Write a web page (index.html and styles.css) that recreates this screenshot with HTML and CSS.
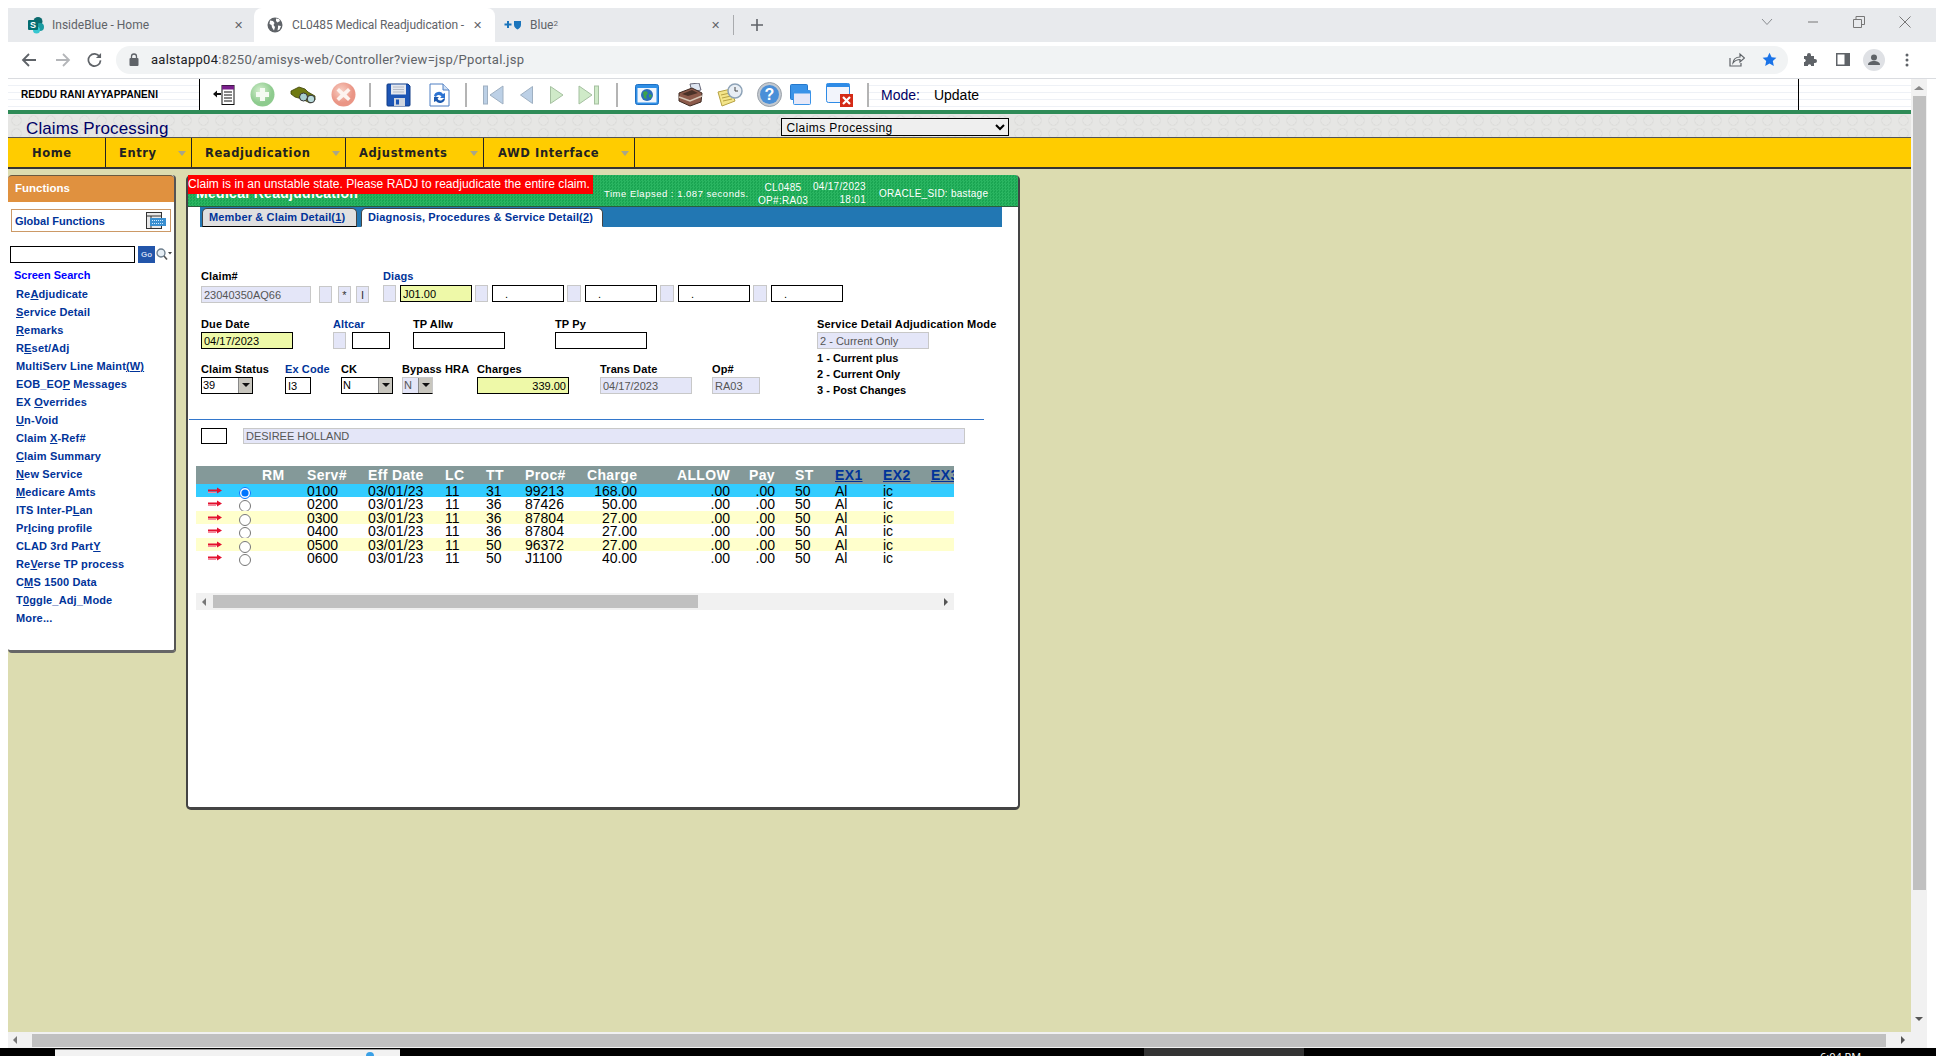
FILE: index.html
```html
<!DOCTYPE html>
<html lang="en">
<head>
    <meta charset="UTF-8">
    <meta name="viewport" content="width=device-width, initial-scale=1.0">
    <title>CL0485 Medical Readjudication</title>
    <link rel="stylesheet" href="styles.css">
</head>
<body>
<div class="app">
    <!-- browser tabs -->
    <div class="tabstrip">
        <div class="tab tab-first">
            <svg class="fav" width="18" height="18" viewBox="0 0 18 18"><circle cx="11" cy="5.5" r="4.5" fill="#0b6a6e"/><circle cx="13" cy="11" r="4" fill="#1a9ba1"/><circle cx="9.5" cy="14" r="3.5" fill="#37c6d0"/><rect x="1" y="4" width="10" height="10" rx="1" fill="#036c70"/><text x="6" y="12.2" class="fav-s">S</text></svg>
            <span class="tab-text">InsideBlue - Home</span>
            <span class="tab-x">&#10005;</span>
        </div>
        <div class="tab tab-active">
            <svg class="fav" width="16" height="16" viewBox="0 0 16 16"><circle cx="8" cy="8" r="7.5" fill="#5f6368"/><path d="M3 3.5l3 .5 1.5 2-1 2 1.500 2-1 3.500-2-3-.5-2.500-2-1zM9 1.500l3 .5 1 2-2.500 1.500-1.500-1.500zM11 8.500l3 .5-1.500 3.500-2 1 .5-3z" fill="#fff"/></svg>
            <span class="tab-text tab-text-long">CL0485 Medical Readjudication -</span>
            <span class="tab-x">&#10005;</span>
        </div>
        <div class="tab tab-third">
            <svg class="fav" width="18" height="10" viewBox="0 0 18 10"><path d="M3 1h2v2.500h2.500v2H5V8H3V5.500H.5v-2H3z" fill="#1b75bc"/><path d="M10 1h7v4c0 2-2 3.500-3.500 4.500C12 8.500 10 7 10 5z" fill="#1b75bc"/></svg>
            <span class="tab-text">Blue<sup class="sup">2</sup></span>
            <span class="tab-x">&#10005;</span>
        </div>
        <span class="tab-div"></span>
        <svg class="new-tab" width="12" height="12" viewBox="0 0 12 12"><path d="M6 0v12M0 6h12" stroke="#5f6368" stroke-width="1.600"/></svg>
        <div class="win-btns">
            <svg width="12" height="8" viewBox="0 0 12 8"><path d="M1 1l5 5.500L11 1" fill="none" stroke="#8a8d91"/></svg>
            <svg width="12" height="2" viewBox="0 0 12 2"><path d="M1 1h10" stroke="#777"/></svg>
            <svg width="12" height="12" viewBox="0 0 12 12"><path d="M.5 3.500h8v8h-8zM3 3.500V.5h8.500v8H8.500" fill="none" stroke="#777"/></svg>
            <svg width="12" height="12" viewBox="0 0 12 12"><path d="M.5.5l11 11M11.500.5l-11 11" stroke="#777"/></svg>
        </div>
    </div>

    <!-- browser address bar -->
    <div class="navbar">
        <svg class="nav-back" width="16" height="16" viewBox="0 0 16 16"><path d="M15 8H2M8 2L2 8l6 6" fill="none" stroke="#5f6368" stroke-width="1.800"/></svg>
        <svg class="nav-fwd" width="16" height="16" viewBox="0 0 16 16"><path d="M1 8h13M8 2l6 6-6 6" fill="none" stroke="#b4b6b9" stroke-width="1.800"/></svg>
        <svg class="nav-reload" width="15" height="15" viewBox="0 0 16 16"><path d="M13.500 5A6.500 6.500 0 1 0 14.500 9" fill="none" stroke="#5f6368" stroke-width="1.800"/><path d="M15 1v5.500H9.500z" fill="#5f6368"/></svg>
        <div class="address">
            <svg class="lock" width="10" height="13" viewBox="0 0 10 13"><path d="M2.500 5V3.500a2.500 2.500 0 0 1 5 0V5" fill="none" stroke="#5f6368" stroke-width="1.300"/><rect x=".5" y="5" width="9" height="8" rx="1" fill="#5f6368"/></svg>
            <span class="url"><span class="url-host">aalstapp04</span>:8250/amisys-web/Controller?view=jsp/Pportal.jsp</span>
            <svg class="share" width="16" height="15" viewBox="0 0 16 15"><path d="M1 6v8h11v-3" fill="none" stroke="#5f6368" stroke-width="1.200"/><path d="M4 11c.5-4 3.500-6 7-6V2l4.500 4-4.500 4V7.500C8 7.500 6 8.500 4 11z" fill="none" stroke="#5f6368" stroke-width="1.200"/></svg>
            <svg class="star" width="15" height="15" viewBox="0 0 24 24"><path d="M12 1l3.400 7.300 7.600.9-5.700 5.300 1.600 7.900L12 18.400 5.100 22.400l1.600-7.900L1 9.200l7.600-.9z" fill="#1a73e8"/></svg>
        </div>
        <svg class="puzzle" width="15" height="15" viewBox="0 0 15 15"><path d="M1 4h3V3a2 2 0 0 1 4 0v1h3v3h1a2 2 0 0 1 0 4h-1v3H8v-1a2 2 0 0 0-3 0v1H1v-4h1a2 2 0 0 0 0-3H1z" fill="#5f6368"/></svg>
        <svg class="sidep" width="14" height="13" viewBox="0 0 14 13"><rect width="14" height="13" fill="#5f6368"/><rect x="1.500" y="1.500" width="7" height="10" fill="#fff"/></svg>
        <svg class="avatar" width="22" height="22" viewBox="0 0 22 22"><circle cx="11" cy="11" r="11" fill="#dfe1e5"/><circle cx="11" cy="8.500" r="3" fill="#5f6368"/><path d="M5 16c0-3 3-4 6-4s6 1 6 4z" fill="#5f6368"/></svg>
        <svg class="dots" width="4" height="14" viewBox="0 0 4 14"><circle cx="2" cy="2" r="1.500" fill="#5f6368"/><circle cx="2" cy="7" r="1.500" fill="#5f6368"/><circle cx="2" cy="12" r="1.500" fill="#5f6368"/></svg>
    </div>

    <div class="window">
        <div class="page">
            <!-- application toolbar -->
            <div class="toolbar">
                <div class="user-cell">REDDU RANI AYYAPPANENI</div>
                <div class="tools">
                    <svg class="ic g13" width="22" height="20" viewBox="0 0 22 20"><rect x="9" y=".5" width="12" height="19" fill="#fff" stroke="#111"/><rect x="9" y=".5" width="12" height="4" fill="#7a1f8c"/><path d="M11 7h8M11 10h8M11 13h8M11 16h8" stroke="#111"/><path d="M0 9l4-3.500V8h4v2H4v2.500z" fill="#111"/></svg>
                    <svg class="ic" width="25" height="25" viewBox="0 0 25 25"><defs><radialGradient id="gPlus" cx=".4" cy=".35"><stop offset="0" stop-color="#d6f0d0"/><stop offset="1" stop-color="#8ecb8e"/></radialGradient></defs><circle cx="12.500" cy="12.500" r="12" fill="url(#gPlus)"/><path d="M10 6h5v4h4v5h-4v4h-5v-4H6v-5h4z" fill="#f4fbf2"/></svg>
                    <svg class="ic" width="27" height="18" viewBox="0 0 27 18"><path d="M1 5l8-4 6 2 3 3 7 4v4l-5 3-4-2-4-2-7-2-4-3z" fill="#6f7a12" stroke="#3d4206" stroke-width=".8"/><circle cx="13.500" cy="11" r="4" fill="#a9cfcf" stroke="#333"/><circle cx="21" cy="13" r="3.800" fill="#b8dada" stroke="#333"/></svg>
                    <svg class="ic g14" width="25" height="25" viewBox="0 0 25 25"><defs><radialGradient id="gStop" cx=".4" cy=".35"><stop offset="0" stop-color="#f8d0c4"/><stop offset="1" stop-color="#ea9585"/></radialGradient></defs><circle cx="12.500" cy="12.500" r="12" fill="url(#gStop)"/><path d="M8 6l4.500 4L17 6l2.500 2.500-4 4 4 4L17 19l-4.500-4L8 19l-2.500-2.500 4-4-4-4z" fill="#fdf3ef"/></svg>
                    <span class="sep g13"></span>
                    <svg class="ic" width="25" height="24" viewBox="0 0 25 24"><path d="M1 2a1 1 0 0 1 1-1h20l2 2v19a1 1 0 0 1-1 1H2a1 1 0 0 1-1-1z" fill="#1d55b5" stroke="#123c85"/><rect x="5" y="1.500" width="15" height="10" fill="#e4e7ee"/><path d="M7 4h11M7 6.500h11M7 9h11" stroke="#b4bac6"/><rect x="8" y="15" width="11" height="8" fill="#cfd5df"/><rect x="10" y="16.500" width="3" height="5" fill="#1d55b5"/></svg>
                    <svg class="ic g18" width="21" height="24" viewBox="0 0 21 24"><path d="M1 1h13l6 6v16H1z" fill="#fff" stroke="#4f7ec2"/><path d="M14 1v6h6" fill="#cfe0f5" stroke="#4f7ec2"/><path d="M5 13a5 5 0 0 1 9-2l2-1v5h-5l1.500-1.500A3 3 0 0 0 7 14z" fill="#2c73d2"/><path d="M16 15a5 5 0 0 1-9 3l-2 1v-5h5l-1.500 1.500A3 3 0 0 0 14 16z" fill="#1b58ae"/></svg>
                    <span class="sep"></span>
                    <svg class="ic g16" width="21" height="20" viewBox="0 0 21 20"><rect x=".5" y="1" width="4" height="18" fill="#bcd0e6" stroke="#9fb0c2"/><path d="M20 1v18L7 10z" fill="#bcd0e6" stroke="#9fb0c2"/></svg>
                    <svg class="ic g16" width="13" height="18" viewBox="0 0 13 18"><path d="M12.500 .5v17L.5 9z" fill="#bcd0e6" stroke="#9fb0c2"/></svg>
                    <svg class="ic g17" width="14" height="18" viewBox="0 0 14 18"><path d="M.5 .5v17L13 9z" fill="#cfeac8" stroke="#a5c0a0"/></svg>
                    <svg class="ic g14" width="21" height="20" viewBox="0 0 21 20"><path d="M1 1v18l13-9z" fill="#cfeac8" stroke="#a5c0a0"/><rect x="16.500" y="1" width="4" height="18" fill="#cfeac8" stroke="#a5c0a0"/></svg>
                    <span class="sep g17"></span>
                    <svg class="ic g17" width="24" height="21" viewBox="0 0 24 21"><rect x=".5" y=".5" width="23" height="20" rx="2" fill="#2f8fe6" stroke="#1d6fc4"/><rect x="2.500" y="4" width="19" height="14.500" fill="#f2f6fc"/><circle cx="12" cy="11" r="6" fill="#2b6db8"/><path d="M8 8l3-1 2 2-2 3 1 3-3-1zM14 10l3 1-1 3-2-1z" fill="#3da34a"/></svg>
                    <svg class="ic g18" width="27" height="24" viewBox="0 0 27 24"><path d="M13 1l9-1 2 7-9 2z" fill="#dfe6f2" stroke="#667"/><path d="M2 10l13-5 10 5-1 9-11 4L2 18z" fill="#8c5a4a" stroke="#3e2a22"/><path d="M2 14l11 4 12-5" fill="none" stroke="#d8c8b8" stroke-width="1.500"/><path d="M5 11l10-4 6 3-10 3z" fill="#4a3228"/></svg>
                    <svg class="ic g13" width="26" height="24" viewBox="0 0 26 24"><path d="M1 9l13-3 4 12-13 5z" fill="#f4e58a" stroke="#b7a243"/><path d="M4 12l9-2M5 15l9-2M6 18l9-2" stroke="#b7a243"/><circle cx="18" cy="8" r="7" fill="#e8eef5" stroke="#8ea3b8" stroke-width="1.500"/><path d="M18 4v4h3" fill="none" stroke="#444"/></svg>
                    <svg class="ic g14" width="25" height="25" viewBox="0 0 25 25"><circle cx="12.500" cy="12.500" r="12" fill="#c3c9d0" stroke="#9aa1a9"/><circle cx="12.500" cy="12.500" r="9.500" fill="#4a8fd8"/><text x="12.500" y="18" class="help-mark">?</text></svg>
                    <svg class="ic g8" width="21" height="21" viewBox="0 0 21 21"><rect x=".5" y=".5" width="17" height="15" rx="1" fill="#3a93e8" stroke="#2478cc"/><rect x="3.500" y="6.500" width="17" height="14" rx="1" fill="#e6e8f8" stroke="#3a93e8"/><rect x="3.500" y="6.500" width="17" height="3" fill="#3a93e8"/></svg>
                    <svg class="ic" width="27" height="24" viewBox="0 0 27 24"><rect x=".5" y=".5" width="23" height="19" rx="2" fill="#f2f4fb" stroke="#2e8be6"/><rect x=".5" y=".5" width="23" height="3.500" fill="#2e8be6"/><rect x="14" y="11" width="13" height="13" fill="#d42a16"/><path d="M17 14l7 7M24 14l-7 7" stroke="#fff" stroke-width="2.200"/></svg>
                    <span class="sep g14"></span>
                </div>
                <div class="mode-cell"><span class="mode-label">Mode:</span><span class="mode-val">Update</span></div>
                <div class="tool-rest"></div>
            </div>

            <!-- title row -->
            <div class="titleband">
                <span class="app-title">Claims Processing</span>
                <select class="app-select"><option>Claims Processing</option></select>
            </div>

            <!-- main menu -->
            <div class="menubar">
                <div class="mi mi-home">Home</div>
                <div class="mi mi-entry has-sub">Entry</div>
                <div class="mi mi-readj has-sub">Readjudication</div>
                <div class="mi mi-adj has-sub">Adjustments</div>
                <div class="mi mi-awd has-sub">AWD Interface</div>
            </div>

            <div class="workarea">
                <!-- left functions panel -->
                <div class="sidepanel">
                    <div class="side-head">Functions</div>
                    <div class="global-box">
                        <span>Global Functions</span>
                        <svg width="20" height="17" viewBox="0 0 20 17"><rect x=".5" y=".5" width="15" height="16" fill="#e8e8e8" stroke="#333"/><path d="M.5 4h15M5 4v13" stroke="#333"/><rect x="4" y="6" width="16" height="8" fill="#3a8fd0"/><path d="M6 8.500h12M6 11.500h12" stroke="#d6ecff" stroke-dasharray="1 1"/></svg>
                    </div>
                    <div class="search-row">
                        <input class="search-input" type="text">
                        <span class="go-btn">Go</span>
                        <svg width="16" height="12" viewBox="0 0 16 12"><circle cx="5" cy="5" r="4" fill="#e6eef5" stroke="#6e7f8e" stroke-width="1.300"/><path d="M8 8l3 3.500" stroke="#555" stroke-width="1.600"/><path d="M12 4h4l-2 2.500z" fill="#444"/></svg>
                    </div>
                    <div class="screen-search">Screen Search</div>
                    <ul class="fn-list">
                        <li>Re<u>A</u>djudicate</li>
                        <li><u>S</u>ervice Detail</li>
                        <li><u>R</u>emarks</li>
                        <li>R<u>E</u>set/Adj</li>
                        <li>MultiServ Line Maint<u>(W)</u></li>
                        <li>EOB_EO<u>P</u> Messages</li>
                        <li>EX <u>O</u>verrides</li>
                        <li><u>U</u>n-Void</li>
                        <li>Claim <u>X</u>-Ref#</li>
                        <li><u>C</u>laim Summary</li>
                        <li><u>N</u>ew Service</li>
                        <li><u>M</u>edicare Amts</li>
                        <li>ITS Inter-P<u>L</u>an</li>
                        <li>Pr<u>I</u>cing profile</li>
                        <li>CLAD 3rd Part<u>Y</u></li>
                        <li>Re<u>V</u>erse TP process</li>
                        <li>C<u>M</u>S 1500 Data</li>
                        <li>T<u>0</u>ggle_Adj_Mode</li>
                        <li>More...</li>
                    </ul>
                </div>

                <!-- claim panel -->
                <div class="claimpanel">
                    <div class="claim-head">
                        <div class="claim-title">Medical Readjudication</div>
                        <div class="h-elapsed">Time Elapsed : 1.087 seconds.</div>
                        <div class="h-op">CL0485<br>OP#:RA03</div>
                        <div class="h-date">04/17/2023<br>18:01</div>
                        <div class="h-sid">ORACLE_SID: bastage</div>
                        <div class="alert">Claim is in an unstable state. Please RADJ to readjudicate the entire claim.</div>
                    </div>
                    <div class="tabbar">
                        <div class="ctab ctab-off">Member &amp; Claim Detail(<u>1</u>)</div>
                        <div class="ctab ctab-on">Diagnosis, Procedures &amp; Service Detail(<u>2</u>)</div>
                    </div>

                    <div class="claimform">
                        <div class="row1">
                            <div class="cell">
                                <label class="lbl">Claim#</label>
                                <div class="inline shift">
                                    <input class="fi ro w110" value="23040350AQ66">
                                    <input class="fi ro w13 ml8">
                                    <input class="fi ro w13 ml6 mid" value="*">
                                    <input class="fi ro w13 ml5 mid" value="I">
                                </div>
                            </div>
                            <div class="cell">
                                <label class="lbl link">Diags</label>
                                <div class="inline">
                                    <input class="fi ro w13">
                                    <input class="fi req w72 ml4" value="J01.00">
                                    <input class="fi ro w13 ml3">
                                    <input class="fi w72 ml4 dot" value=".">
                                    <input class="fi ro w14 ml3">
                                    <input class="fi w72 ml4 dot" value=".">
                                    <input class="fi ro w14 ml3">
                                    <input class="fi w72 ml4 dot" value=".">
                                    <input class="fi ro w14 ml3">
                                    <input class="fi w72 ml4 dot" value=".">
                                </div>
                            </div>
                        </div>

                        <div class="midform">
                            <div class="midleft">
                                <div class="row2">
                                    <div class="cell"><label class="lbl">Due Date</label><input class="fi req w92" value="04/17/2023"></div>
                                    <div class="cell"><label class="lbl link">Altcar</label><div class="inline"><input class="fi ro w13"><input class="fi w38 ml6"></div></div>
                                    <div class="cell"><label class="lbl">TP Allw</label><input class="fi w92"></div>
                                    <div class="cell"><label class="lbl">TP Py</label><input class="fi w92"></div>
                                </div>
                                <div class="row3">
                                    <div class="cell"><label class="lbl">Claim Status</label><div class="combo w52"><span>39</span><i></i></div></div>
                                    <div class="cell"><label class="lbl link">Ex Code</label><input class="fi w26" value="I3"></div>
                                    <div class="cell"><label class="lbl">CK</label><div class="combo w52"><span>N</span><i></i></div></div>
                                    <div class="cell"><label class="lbl">Bypass HRA</label><div class="combo combo-ro w31"><span>N</span><i></i></div></div>
                                    <div class="cell"><label class="lbl">Charges</label><input class="fi req w92 right" value="339.00"></div>
                                    <div class="cell"><label class="lbl">Trans Date</label><input class="fi ro w92" value="04/17/2023"></div>
                                    <div class="cell"><label class="lbl">Op#</label><input class="fi ro w48" value="RA03"></div>
                                </div>
                            </div>
                            <div class="modebox">
                                <label class="lbl lbl-wide">Service Detail Adjudication Mode</label>
                                <input class="fi ro w112" value="2 - Current Only">
                                <div class="modeopt">1 - Current plus</div>
                                <div class="modeopt">2 - Current Only</div>
                                <div class="modeopt">3 - Post Changes</div>
                            </div>
                        </div>

                        <div class="rule"></div>
                        <div class="namerow">
                            <input class="fi w26">
                            <input class="fi ro namefield" value="DESIREE HOLLAND">
                        </div>
                    </div>

                    <table class="svc">
                        <colgroup><col class="c40"><col class="c26"><col class="c45"><col class="c61"><col class="c77"><col class="c41"><col class="c39"><col class="c62"><col class="c50"><col class="c93"><col class="c45"><col class="c60"><col class="c48"><col class="c48"><col class="c23"></colgroup>
                        <thead>
                            <tr><th></th><th></th><th>RM</th><th>Serv#</th><th>Eff Date</th><th>LC</th><th>TT</th><th>Proc#</th><th class="num">Charge</th><th class="num">ALLOW</th><th class="num">Pay</th><th class="st">ST</th><th><a class="exlink">EX1</a></th><th><a class="exlink">EX2</a></th><th class="clip"><a class="exlink">EX3</a></th></tr>
                        </thead>
                        <tbody>
                            <tr class="sel"><td><svg class="arr" width="14" height="8" viewBox="0 0 14 8"><path d="M0 2.500h9V.5L14 3.500 9 6.500V4.500H0z" fill="#e3102f"/><path d="M0 5.500h8" stroke="#f58aa0"/></svg></td><td><input type="radio" name="svc" checked></td><td></td><td>0100</td><td class="dt">03/01/23</td><td>11</td><td>31</td><td>99213</td><td class="num">168.00</td><td class="num">.00</td><td class="num">.00</td><td class="st">50</td><td>Al</td><td>ic</td><td></td></tr>
                            <tr><td><svg class="arr" width="14" height="8" viewBox="0 0 14 8"><path d="M0 2.500h9V.5L14 3.500 9 6.500V4.500H0z" fill="#e3102f"/><path d="M0 5.500h8" stroke="#f58aa0"/></svg></td><td><input type="radio" name="svc"></td><td></td><td>0200</td><td class="dt">03/01/23</td><td>11</td><td>36</td><td>87426</td><td class="num">50.00</td><td class="num">.00</td><td class="num">.00</td><td class="st">50</td><td>Al</td><td>ic</td><td></td></tr>
                            <tr class="alt"><td><svg class="arr" width="14" height="8" viewBox="0 0 14 8"><path d="M0 2.500h9V.5L14 3.500 9 6.500V4.500H0z" fill="#e3102f"/><path d="M0 5.500h8" stroke="#f58aa0"/></svg></td><td><input type="radio" name="svc"></td><td></td><td>0300</td><td class="dt">03/01/23</td><td>11</td><td>36</td><td>87804</td><td class="num">27.00</td><td class="num">.00</td><td class="num">.00</td><td class="st">50</td><td>Al</td><td>ic</td><td></td></tr>
                            <tr><td><svg class="arr" width="14" height="8" viewBox="0 0 14 8"><path d="M0 2.500h9V.5L14 3.500 9 6.500V4.500H0z" fill="#e3102f"/><path d="M0 5.500h8" stroke="#f58aa0"/></svg></td><td><input type="radio" name="svc"></td><td></td><td>0400</td><td class="dt">03/01/23</td><td>11</td><td>36</td><td>87804</td><td class="num">27.00</td><td class="num">.00</td><td class="num">.00</td><td class="st">50</td><td>Al</td><td>ic</td><td></td></tr>
                            <tr class="alt"><td><svg class="arr" width="14" height="8" viewBox="0 0 14 8"><path d="M0 2.500h9V.5L14 3.500 9 6.500V4.500H0z" fill="#e3102f"/><path d="M0 5.500h8" stroke="#f58aa0"/></svg></td><td><input type="radio" name="svc"></td><td></td><td>0500</td><td class="dt">03/01/23</td><td>11</td><td>50</td><td>96372</td><td class="num">27.00</td><td class="num">.00</td><td class="num">.00</td><td class="st">50</td><td>Al</td><td>ic</td><td></td></tr>
                            <tr><td><svg class="arr" width="14" height="8" viewBox="0 0 14 8"><path d="M0 2.500h9V.5L14 3.500 9 6.500V4.500H0z" fill="#e3102f"/><path d="M0 5.500h8" stroke="#f58aa0"/></svg></td><td><input type="radio" name="svc"></td><td></td><td>0600</td><td class="dt">03/01/23</td><td>11</td><td>50</td><td>J1100</td><td class="num">40.00</td><td class="num">.00</td><td class="num">.00</td><td class="st">50</td><td>Al</td><td>ic</td><td></td></tr>
                        </tbody>
                    </table>

                    <div class="svc-scroll">
                        <span class="arrow-left"></span>
                        <span class="svc-thumb"></span>
                        <span class="arrow-right"></span>
                    </div>
                </div>
            </div>

            <div class="hbar">
                <span class="arrow-left"></span>
                <span class="hbar-thumb"></span>
                <span class="arrow-right"></span>
            </div>
        </div>

        <div class="vbar">
            <span class="arrow-up"></span>
            <span class="vbar-thumb"></span>
            <span class="arrow-down"></span>
        </div>
    </div>

    <!-- windows taskbar, mostly cut off -->
    <div class="taskbar">
        <div class="task-search"><span class="task-dot"></span></div>
        <div class="task-open"></div>
        <div class="task-clock">6:04 PM</div>
    </div>
</div>
</body>
</html>
```

FILE: styles.css
```css
* {
    box-sizing: border-box;
}
html, body {
    margin: 0;
    padding: 0;
    background: #fff;
}
.app {
    width: 1936px;
    height: 1056px;
    display: flex;
    flex-direction: column;
    overflow: hidden;
    font-family: "Liberation Sans", Arial, sans-serif;
    font-size: 11px;
}

/* browser tabs */
.tabstrip {
    height: 34px;
    margin: 8px 0 0 8px;
    background: #e8eaed;
    display: flex;
    align-items: center;
    flex: none;
    font-family: Roboto, sans-serif;
    font-size: 12px;
    color: #5f6368;
}
.tab {
    height: 34px;
    display: flex;
    align-items: center;
    position: relative;
}
.tab-text {
    white-space: nowrap;
}
.tab-text-long {
    letter-spacing: -.1px;
}
.tab-x {
    position: absolute;
    font-size: 11px;
    color: #5f6368;
}
.tab-first {
    width: 246px;
    padding-left: 19px;
}
.tab-first .fav { margin-right: 7px; }
.tab-first .tab-x { left: 226px; }
.tab-active {
    width: 241px;
    padding-left: 13px;
    background: #fff;
    border-radius: 8px 8px 0 0;
}
.tab-active .fav { margin-right: 9px; }
.tab-active .tab-x { left: 219px; }
.tab-third {
    width: 238px;
    padding-left: 9px;
}
.tab-third .fav { margin-right: 8px; }
.tab-third .tab-x { left: 216px; }
.fav-s {
    font-family: "Liberation Sans", sans-serif;
    font-size: 9px;
    font-weight: bold;
    fill: #fff;
    text-anchor: middle;
}
.sup {
    font-size: 8px;
    vertical-align: top;
    line-height: 12px;
}
.tab-div {
    width: 1px;
    height: 20px;
    background: #a9abae;
}
.new-tab {
    margin-left: 17px;
}
.win-btns {
    margin-left: auto;
    width: 175px;
    height: 100%;
    display: flex;
    align-items: center;
    justify-content: space-between;
    padding: 0 25px 6px 0;
}

/* browser address bar */
.navbar {
    height: 37px;
    flex: none;
    margin-left: 8px;
    display: flex;
    align-items: center;
    border-bottom: 1px solid #dadce0;
    padding-bottom: 1px;
}
.nav-back { margin-left: 13px; }
.nav-fwd { margin-left: 18px; }
.nav-reload { margin-left: 16px; }
.address {
    width: 1672px;
    height: 28px;
    margin-left: 14px;
    border-radius: 14px;
    background: #f1f3f4;
    display: flex;
    align-items: center;
    padding-left: 13px;
}
.url {
    margin-left: 12px;
    font-family: Roboto, sans-serif;
    font-size: 13px;
    color: #5f6368;
    letter-spacing: .27px;
}
.url-host {
    color: #202124;
}
.share {
    margin-left: auto;
}
.star {
    margin-left: 17px;
    margin-right: 11px;
}
.puzzle { margin-left: 15px; }
.sidep { margin-left: 18px; }
.avatar { margin-left: 13px; }
.dots { margin-left: 20px; }

/* app window */
.window {
    flex: 1;
    min-height: 0;
    display: flex;
    margin-left: 8px;
}
.page {
    width: 1903px;
    display: flex;
    flex-direction: column;
}
.toolbar {
    height: 31px;
    display: flex;
    flex: none;
    align-items: stretch;
    background: repeating-linear-gradient(#fff 0 6px, #eef1f6 6px 7px);
}
.user-cell {
    width: 192px;
    padding-left: 13px;
    border-right: 1.500px solid #000;
    font-size: 10px;
    font-weight: bold;
    letter-spacing: .1px;
    color: #000;
    display: flex;
    align-items: center;
    white-space: nowrap;
}
.tools {
    display: flex;
    align-items: center;
    background: #fff;
    width: 669px;
}
.ic {
    flex: none;
    margin-left: 15px;
}
.sep {
    flex: none;
    width: 2px;
    height: 24px;
    margin-left: 15px;
    background: #b4b4b4;
}
.g8 { margin-left: 8px; }
.g13 { margin-left: 13px; }
.g14 { margin-left: 14px; }
.g16 { margin-left: 16px; }
.g17 { margin-left: 17px; }
.g18 { margin-left: 18px; }
.help-mark {
    font-family: "Liberation Sans", sans-serif;
    font-size: 16px;
    font-weight: bold;
    fill: #fff;
    text-anchor: middle;
}
.mode-cell {
    width: 930px;
    padding-left: 12px;
    border-right: 1.500px solid #000;
    display: flex;
    align-items: center;
    font-size: 14px;
}
.mode-label {
    color: #000066;
    margin-right: 14px;
}
.mode-val {
    color: #000;
}
.tool-rest {
    flex: 1;
}

.titleband {
    height: 28px;
    flex: none;
    border-top: 4px solid #2e8b57;
    border-bottom: 1px solid #555;
    background-color: #e6e6e4;
    background-image: radial-gradient(circle at 50% 50%, transparent 4px, #dcdcda 4.500px, transparent 6px);
    background-size: 17px 13px;
    display: flex;
    align-items: flex-end;
    position: relative;
}
.app-title {
    margin-left: 18px;
    margin-bottom: -1px;
    font-size: 17px;
    line-height: 19px;
    color: #000066;
    letter-spacing: .1px;
}
.app-select {
    margin-left: 613px;
    margin-bottom: 1px;
    width: 228px;
    height: 18px;
    border: 1.500px solid #000;
    border-radius: 0;
    background-color: #efefef;
    font-family: "Liberation Sans", Arial, sans-serif;
    font-size: 12px;
    letter-spacing: .4px;
    color: #000;
    padding: 1px 0 0;
}

/* main menu */
.menubar {
    height: 31px;
    flex: none;
    display: flex;
    background: #ffcc00;
    border-bottom: 2px solid #333;
    font-family: "DejaVu Sans", Verdana, sans-serif;
    font-size: 11.500px;
    font-weight: bold;
    letter-spacing: .6px;
    color: #222;
}
.mi {
    display: flex;
    align-items: center;
    border-right: 1.500px solid #222;
    white-space: nowrap;
    padding-top: 1px;
}
.has-sub {
    justify-content: space-between;
    padding-right: 5px;
}
.has-sub::after {
    content: "";
    border-left: 4.500px solid transparent;
    border-right: 4.500px solid transparent;
    border-top: 5px solid #a8a68a;
}
.mi-home { width: 98px; padding-left: 24px; }
.mi-entry { width: 86px; padding-left: 13px; }
.mi-readj { width: 154px; padding-left: 13px; }
.mi-adj { width: 138px; padding-left: 13px; }
.mi-awd { width: 151px; padding-left: 14px; }

.workarea {
    flex: 1;
    min-height: 0;
    background: #dcdcb0;
    display: flex;
    align-items: flex-start;
    padding-top: 6px;
    gap: 10px;
}

/* functions panel */
.sidepanel {
    width: 168px;
    height: 478px;
    background: #fff;
    border-right: 2px solid #555;
    border-bottom: 3px solid #666;
    border-radius: 4px;
    color: #003399;
    font-weight: bold;
    flex: none;
}
.side-head {
    height: 27px;
    background: #e0913f;
    border-top: 1px solid #6b5a40;
    border-radius: 4px 4px 0 0;
    color: #fff;
    font-size: 11.500px;
    line-height: 24px;
    padding-left: 7px;
}
.global-box {
    margin: 7px 3px 0 3px;
    height: 23px;
    border: 1px solid #cc9966;
    display: flex;
    align-items: center;
    justify-content: space-between;
    padding: 0 4px 0 3px;
}
.search-row {
    margin: 13px 0 0 2px;
    display: flex;
    align-items: center;
    height: 18px;
}
.search-input {
    width: 125px;
    height: 17px;
    border: 1.500px solid #000;
    padding: 0;
    margin-top: 1px;
}
.go-btn {
    width: 17px;
    height: 17px;
    margin: 0 1px 0 3px;
    background: #2255aa;
    color: #c8d4ee;
    font-size: 8px;
    line-height: 17px;
    text-align: center;
}
.screen-search {
    margin: 5px 0 0 6px;
    font-size: 11px;
    line-height: 14px;
    color: #0000ff;
}
.fn-list {
    list-style: none;
    margin: 3px 0 0;
    padding: 0 0 0 8px;
    font-size: 11px;
    line-height: 18px;
    letter-spacing: .15px;
}
.fn-list li {
    height: 18px;
    white-space: nowrap;
}

/* claim panel */
.claimpanel {
    width: 834px;
    height: 635px;
    background: #fff;
    border-left: 2px solid #444;
    border-right: 2px solid #444;
    border-bottom: 3px solid #444;
    border-radius: 5px;
    flex: none;
}
.claim-head {
    height: 32px;
    position: relative;
    display: flex;
    align-items: flex-start;
    border-radius: 4px 4px 0 0;
    border-bottom: 1px solid #2b5d3d;
    background-color: #1aa552;
    background-image: repeating-conic-gradient(#2ab561 0 25%, transparent 0 50%);
    background-size: 3px 3px;
    color: #fff;
    font-size: 10px;
    line-height: 13px;
    white-space: nowrap;
}
.claim-title {
    width: 416px;
    margin-top: 10px;
    padding-left: 8px;
    font-size: 14px;
    font-weight: bold;
    line-height: 17px;
    letter-spacing: .3px;
}
.h-elapsed {
    width: 154px;
    margin-top: 12px;
    font-size: 9.500px;
    letter-spacing: .5px;
}
.h-op {
    width: 50px;
    margin-top: 6px;
    text-align: center;
    letter-spacing: .3px;
}
.h-date {
    width: 58px;
    margin-top: 5px;
    text-align: right;
    letter-spacing: .3px;
}
.h-sid {
    margin: 12px 0 0 13px;
    letter-spacing: .25px;
}
.alert {
    position: absolute;
    left: 0;
    top: 0;
    width: 405px;
    height: 19px;
    background: #ff0000;
    color: #fff;
    font-size: 12px;
    line-height: 18px;
    letter-spacing: .05px;
}
.tabbar {
    margin-left: 12px;
    width: 802px;
    height: 20px;
    background: #2277b3;
    display: flex;
    align-items: flex-end;
    gap: 4px;
    padding-left: 2px;
    font-weight: bold;
    color: #003399;
    letter-spacing: .15px;
}
.ctab {
    height: 19px;
    border-radius: 5px 5px 0 0;
    border: 1px solid #444;
    border-bottom: 1px solid #000;
    line-height: 17px;
    white-space: nowrap;
    padding-left: 6px;
}
.ctab-off {
    width: 155px;
    background: #e0e0e0;
}
.ctab-on {
    width: 242px;
    background: #fff;
    border-bottom-color: #fff;
}

/* claim form */
.claimform {
    padding: 42px 0 0 13px;
}
.cell {
    display: flex;
    flex-direction: column;
    align-items: flex-start;
}
.lbl {
    font-weight: bold;
    line-height: 14px;
    color: #000;
    margin-bottom: 1px;
    white-space: nowrap;
    letter-spacing: .12px;
}
.lbl-wide {
    letter-spacing: .2px;
}
.link {
    color: #003399;
}
.inline {
    display: flex;
}
.shift {
    margin-top: 1px;
}
.row1 {
    display: grid;
    grid-template-columns: 182px auto;
    justify-content: start;
}
.row1 .lbl {
    margin-bottom: 2px;
}
.midform {
    display: flex;
    margin-top: 14px;
}
.midleft {
    width: 616px;
}
.row2 {
    display: grid;
    grid-template-columns: 132px 80px 142px auto;
    justify-content: start;
}
.row3 {
    display: grid;
    grid-template-columns: 84px 56px 61px 75px 123px 112px auto;
    justify-content: start;
    margin-top: 13px;
}
.fi {
    height: 17px;
    border: 1.500px solid #000;
    border-radius: 0;
    background: #fff;
    padding: 0 0 0 2px;
    margin: 0;
    font-family: "Liberation Sans", Arial, sans-serif;
    font-size: 11px;
    color: #000;
    flex: none;
}
.ro {
    background: #e4e6f8;
    border-color: #c8c8c8;
    color: #555;
}
.req {
    background: #eef9a8;
}
.right {
    text-align: right;
    padding-right: 2px;
}
.mid {
    text-align: center;
    padding: 0;
    color: #333;
}
.dot {
    padding-left: 12px;
}
.w13 { width: 13px; padding: 0; }
.w14 { width: 14px; padding: 0; }
.w26 { width: 26px; }
.w31 { width: 31px; }
.w38 { width: 38px; }
.w48 { width: 48px; }
.w52 { width: 52px; }
.w72 { width: 72px; }
.w92 { width: 92px; }
.w110 { width: 110px; }
.w112 { width: 112px; }
.ml3 { margin-left: 3px; }
.ml4 { margin-left: 4px; }
.ml5 { margin-left: 5px; }
.ml6 { margin-left: 6px; }
.ml8 { margin-left: 8px; }
.combo {
    height: 17px;
    display: flex;
    justify-content: space-between;
    border: 1.500px solid #000;
    font-size: 11px;
    line-height: 14px;
    padding-left: 1px;
    color: #000;
}
.combo-ro {
    background: #e4e6f8;
    border-color: #c8c8c8;
    border-bottom-color: #000;
    color: #555;
}
.combo i {
    width: 14px;
    background: #c8c6be;
    border-left: 1px solid #888;
    position: relative;
}
.combo i::after {
    content: "";
    position: absolute;
    left: 2.500px;
    top: 5px;
    border-left: 4px solid transparent;
    border-right: 4px solid transparent;
    border-top: 4px solid #111;
}
.modebox {
    display: flex;
    flex-direction: column;
    align-items: flex-start;
    font-weight: bold;
}
.modeopt {
    font-size: 11px;
    line-height: 16px;
    color: #000;
}
.modebox .fi {
    font-weight: normal;
    margin-bottom: 1px;
}
.rule {
    height: 1px;
    width: 795px;
    margin: 21px 0 0 -12px;
    background: #3377cc;
}
.namerow {
    display: flex;
    gap: 16px;
    margin-top: 8px;
}
.namerow .fi {
    height: 16px;
}
.namefield {
    width: 722px;
}

/* service lines */
.svc {
    margin: 22px 0 0 8px;
    width: 758px;
    table-layout: fixed;
    border-collapse: collapse;
    font-size: 14px;
    color: #000;
}
.c40 { width: 40px; }
.c26 { width: 26px; }
.c45 { width: 45px; }
.c61 { width: 61px; }
.c77 { width: 77px; }
.c41 { width: 41px; }
.c39 { width: 39px; }
.c62 { width: 62px; }
.c50 { width: 50px; }
.c93 { width: 93px; }
.c60 { width: 60px; }
.c48 { width: 48px; }
.c23 { width: 23px; }
.svc th, .svc td {
    padding: 0;
    text-align: left;
    white-space: nowrap;
    overflow: visible;
}
.svc thead tr {
    height: 18px;
    background: #849999;
    color: #fff;
}
.svc th {
    line-height: 15px;
    font-weight: bold;
    letter-spacing: .35px;
}
.svc tbody tr:nth-child(odd) { height: 13px; }
.svc tbody tr:nth-child(even) { height: 14px; }
.svc td {
    line-height: 12px;
    height: inherit;
    vertical-align: middle;
}
.svc .num { text-align: right; }
.svc .st { padding-left: 20px; }
.svc .clip { overflow: hidden; }
.svc .sel { background: #33ccff; }
.svc .alt { background: #ffffcc; }
.svc .dt { letter-spacing: .12px; }
.arr {
    display: block;
    margin-left: 12px;
}
.svc input[type="radio"] {
    display: block;
    width: 12px;
    height: 12px;
    margin: 2px 0 -2px 3px;
}
.exlink {
    color: #003399;
    text-decoration: underline;
}
.svc-scroll {
    margin: 28px 0 0 8px;
    width: 758px;
    height: 17px;
    background: #f1f1f1;
    display: flex;
    align-items: center;
    position: relative;
}
.svc-thumb {
    margin-left: 17px;
    width: 485px;
    height: 13px;
    background: #c0c0c0;
}
.svc-scroll .arrow-left { position: absolute; left: 6px; top: 5px; }
.svc-scroll .arrow-right { position: absolute; right: 6px; top: 5px; }

/* scrollbars */
.arrow-left, .arrow-right, .arrow-up, .arrow-down {
    width: 0;
    height: 0;
    flex: none;
    border: 4px solid transparent;
}
.arrow-left { border-right-color: #777; border-left-width: 0; }
.arrow-right { border-left-color: #555; border-right-width: 0; }
.arrow-up { border-bottom-color: #888; border-top-width: 0; border-left-width: 5px; border-right-width: 5px; }
.arrow-down { border-top-color: #555; border-bottom-width: 0; }
.hbar {
    height: 16px;
    flex: none;
    background: #f1f1f1;
    display: flex;
    align-items: center;
    padding: 0 6px 0 5px;
    justify-content: space-between;
}
.hbar-thumb {
    width: 1854px;
    height: 13px;
    background: #c0c0c0;
}
.vbar {
    width: 16px;
    background: #f1f1f1;
    display: flex;
    flex-direction: column;
    align-items: center;
    padding-top: 7px;
}
.vbar-thumb {
    width: 13px;
    height: 794px;
    margin-top: 6px;
    background: #c0c0c0;
}
.vbar .arrow-down {
    margin-top: 127px;
}

/* taskbar */
.taskbar {
    height: 8px;
    flex: none;
    background: #000;
    display: flex;
    overflow: hidden;
}
.task-search {
    width: 345px;
    margin: 1px 0 0 55px;
    background: #f2f2f2;
    border-top: 1px solid #999;
    position: relative;
}
.task-dot {
    position: absolute;
    left: 311px;
    top: 2px;
    width: 8px;
    height: 8px;
    border-radius: 50%;
    background: #3aa0e6;
}
.task-open {
    width: 160px;
    margin-left: 744px;
    background: #333;
}
.task-clock {
    margin-left: 516px;
    color: #fff;
    font-family: "Open Sans", sans-serif;
    font-size: 11px;
    line-height: 18px;
    white-space: nowrap;
}
```
